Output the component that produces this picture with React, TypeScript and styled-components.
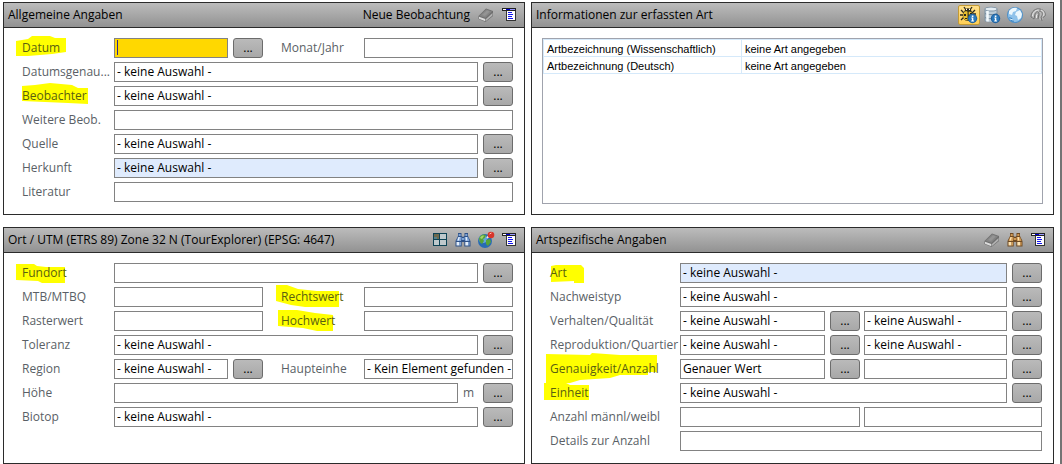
import React, { useState } from 'react';
import styled, { createGlobalStyle } from 'styled-components';

const GlobalStyle = createGlobalStyle`
  * { box-sizing: border-box; }
  body {
    margin: 0;
    background: #fff;
    font-family: 'Open Sans', 'Noto Sans', sans-serif;
    font-size: 12px;
    color: #000;
  }
  button, input, select { font: inherit; color: inherit; margin: 0; }
`;

const Page = styled.main`
  display: grid;
  grid-template-columns: 522fr 523fr;
  grid-template-rows: minmax(213px, auto) minmax(237px, auto);
  gap: 12px 6px;
  padding: 2px 6px 0 3px;
  border-right: 2px solid #747474;
`;

const Panel = styled.section`
  display: flex;
  flex-direction: column;
  min-width: 0;
  border: 1px solid #2b2b2b;
`;

const PanelHeader = styled.header`
  display: flex;
  align-items: center;
  height: 25px;
  padding: 0 4px;
  background: linear-gradient(#bcbcbc, #929292);
  border-bottom: 1px solid #2b2b2b;
`;

const Title = styled.h2`
  flex: 1;
  margin: 0;
  font-size: 12px;
  font-weight: 400;
  line-height: 20px;
  white-space: nowrap;
`;

const Tools = styled.div`
  display: flex;
  align-items: center;
  gap: 1px;
`;

const TextButton = styled.button`
  padding: 0;
  margin-right: 4px;
  border: 0;
  background: none;
  line-height: 20px;
`;

const IconButton = styled.button<{ $active?: boolean }>`
  display: flex;
  align-items: center;
  justify-content: center;
  width: 22px;
  height: 20px;
  padding: 0;
  border: 1px solid ${p => (p.$active ? '#c39a35' : 'transparent')};
  border-radius: 2px;
  background: ${p => (p.$active ? 'linear-gradient(#ffe08a, #ffcf55)' : 'none')};

  svg { flex: none; }
`;

const Form = styled.form`
  display: flex;
  flex-direction: column;
  gap: 4px;
  padding: 10px 11px 10px 18px;
`;

const Row = styled.div<{ $label: number }>`
  display: grid;
  grid-template-columns: ${p => p.$label}px minmax(0, 1fr);
  height: 20px;
`;

const Cells = styled.div<{ $columns?: string; $gap?: number }>`
  display: grid;
  grid-template-columns: ${p => p.$columns ?? 'minmax(0, 1fr)'};
  column-gap: ${p => p.$gap ?? 0}px;
`;

const Group = styled.div`
  display: flex;
  gap: 5px;
  min-width: 0;
`;

const Label = styled.label<{ $inset?: boolean }>`
  position: relative;
  padding-left: ${p => (p.$inset ? 18 : 0)}px;
  line-height: 20px;
  color: #5a5f66;
  white-space: nowrap;
`;

const LabelText = styled.span<{ $marked?: boolean }>`
  position: relative;
  display: block;
  color: ${p => (p.$marked ? '#5a5f10' : 'inherit')};
`;

const Marker = styled.svg`
  position: absolute;
  left: 0;
  top: 0;
  overflow: visible;
  fill: #ffff00;
`;

const Unit = styled.span`
  width: 15px;
  line-height: 20px;
  color: #5a5f66;
`;

const fieldLook = `
  flex: 1;
  min-width: 0;
  width: 100%;
  height: 20px;
  padding: 0 0 0 2px;
  border: 1px solid #828282;
  border-radius: 0;
  outline: none;
  line-height: 18px;
`;

const TextField = styled.input<{ $active?: boolean }>`
  ${fieldLook}
  background: ${p => (p.$active ? '#ffd800' : '#fff')};
`;

const Choice = styled.select<{ $tinted?: boolean }>`
  ${fieldLook}
  appearance: none;
  background: ${p => (p.$tinted ? '#dfebfd' : '#fff')};
`;

const CaretField = styled.div`
  position: relative;
  flex: 1;
  display: flex;
  min-width: 0;
`;

const Caret = styled.span`
  position: absolute;
  left: 3px;
  top: 2px;
  width: 1px;
  height: 15px;
  background: #2a2a90;
`;

const MoreButton = styled.button`
  flex: none;
  width: 30px;
  height: 20px;
  padding: 0;
  border: 1px solid #6c6c6c;
  border-radius: 3px;
  background: linear-gradient(#bababa, #a8a8a8);
  line-height: 18px;
`;

const TableFrame = styled.div`
  flex: 1;
  margin: 10px;
  border: 1px solid #a0a3ad;
`;

const InfoTable = styled.table`
  width: 100%;
  border-collapse: collapse;
  table-layout: fixed;
  font-family: 'Liberation Sans', Arial, sans-serif;
  font-size: 11px;
  line-height: 14px;
`;

const InfoCell = styled.td`
  height: 17px;
  padding: 2px 3px 0;
  border: 1px solid #d5e9fa;
  white-space: nowrap;
`;

const InfoHead = styled(InfoCell).attrs({ as: 'th', scope: 'row' })`
  width: 198px;
  font-weight: 400;
  text-align: left;
`;

const EraserIcon = () => (
  <svg width="16" height="16" viewBox="0 0 16 16">
    <path d="M.5 9 8 1.500 15 4v5l-7.500 6L.5 12z" fill="#6f6f6f" />
    <path d="M1.500 9 8.200 2.300 14 4.500 7.500 10.800z" fill="#858585" />
    <path d="M4 8 9 3.300l2.800 1.100L7 9z" fill="#949494" />
    <path d="M1 9.800l6.300 2.200v2.300L1 11.800z" fill="#dcdcdc" />
    <path d="M8 12l6.500-6v2.500L8 14z" fill="#b2b2b2" />
  </svg>
);

const MenuIcon = () => (
  <svg width="16" height="16" viewBox="0 0 16 16" shapeRendering="crispEdges">
    <path d="M5 2h10v12H5z" fill="#333" />
    <path d="M6 4h8v9H6z" fill="#fff" />
    <path d="M1 1h14v3H1z" fill="#222" />
    <path d="M2 2h3v1H2z" fill="#fff" />
    <path d="M5 2h4v1H5z" fill="#0000d0" />
    <path d="M9 2h5v1H9z" fill="#9a9aff" />
    <path d="M7 5h4v1H7zM7 7h5v1H7zM7 9h4v1H7zM7 11h5v1H7z" fill="#1414f0" />
  </svg>
);

const GridIcon = () => (
  <svg width="16" height="16" viewBox="0 0 16 16" shapeRendering="crispEdges">
    <path d="M1 1h14v13H1z" fill="#0d4254" />
    <path d="M2 2h5v5H2z" fill="#6f6a4e" />
    <path d="M2 5h3v2H2z" fill="#55808a" />
    <path d="M8 2h6v5H8zM2 8h5v5H2zM8 8h6v5H8z" fill="#bfc9cc" />
  </svg>
);

const BinocularsIcon = ({ dark, mid, light }: { dark: string; mid: string; light: string }) => (
  <svg width="16" height="16" viewBox="0 0 16 16">
    <path d="M3 1h3.500v3L8 5l1.500-1V1H13v3l2.500 5v5.500H9.300V10H6.700v4.500H.5V9L3 4z" fill={dark} />
    <path d="M3.700 2h2v2h-2zM10.300 2h2v2h-2zM3 5h3.500L6 9H1.500zM9.500 5H13l1.500 4H10z" fill={mid} />
    <path d="M1.500 10h3v3.500h-3zM10.300 10h3v3.500h-3zM3.500 5h1.300L4 8.500H2.500zM10.500 5h1.300l.5 3.500H11z" fill={light} />
    <path d="M4.500 10H6v3.500H4.500zM13.300 10h1.300v3.500h-1.300zM6.700 6h2.600v2H6.700z" fill={mid} />
  </svg>
);

const GlobePinIcon = () => (
  <svg width="18" height="18" viewBox="0 0 18 18">
    <circle cx="8" cy="10" r="7" fill="#286bb4" />
    <circle cx="6" cy="8" r="4" fill="#65a5dd" />
    <path d="M2 7c2-4 5-4 7-3l-1 3-2 1 1 2-2 3C3 12 2 10 2 7zM9 9l4-1 1 3-3 4-2-2z" fill="#57a33a" />
    <path d="M3 7c1-2 3-3 4-2L5 8z" fill="#a6d56a" />
    <path d="M10 7l3-3" stroke="#eee" strokeWidth="2" />
    <circle cx="14" cy="4" r="3.300" fill="#d8352b" />
    <path d="M12.500 3l2-1" stroke="#ffc0b8" />
  </svg>
);

const InfoBadge = () => (
  <g>
    <circle cx="12.500" cy="12.500" r="4.700" fill="#1d5f9e" />
    <circle cx="12.500" cy="12.500" r="3.700" fill="#2c79bb" />
    <path d="M11.800 9.500h1.600V11h-1.600zM11.300 11.600h2V14.500h.7v.9h-2.800v-.9h.7v-2h-.6z" fill="#fff" />
  </g>
);

const BugInfoIcon = () => (
  <svg width="18" height="18" viewBox="0 0 18 18">
    <path d="M4 1l2 3M12 1l-2 3M1 4l3 3M15 4l-3 3M0 9h3M1 14l3-3M13 8h3" stroke="#2b2a20" strokeWidth="1.300" />
    <path d="M4.500 6c0-5 7-5 7 0z" fill="#25251f" />
    <ellipse cx="8" cy="9.500" rx="5.300" ry="5.500" fill="#3a371c" />
    <path d="M3.500 7c1-2 4-2 4-1v8.500c-4 0-5-4-4-7.500zM8.700 6c2-1 4 1 4 2.500h-4z" fill="#e9bf2d" />
    <path d="M4 8h2v2H4zM5 12h2v1H5zM10 7h2v1h-2z" fill="#2a2820" />
    <path d="M6 3h1v1H6zM9 3h1v1H9z" fill="#fff" />
    <InfoBadge />
  </svg>
);

const DatabaseInfoIcon = () => (
  <svg width="18" height="18" viewBox="0 0 18 18">
    <path d="M1.500 3c0-3 13-3 13 0v11.500c0 2.500-13 2.500-13 0z" fill="#7f93a4" />
    <path d="M2.500 4c0 2 11 2 11 0v10.500c0 1.800-11 1.800-11 0z" fill="#bccbd6" />
    <ellipse cx="8" cy="3" rx="5.500" ry="1.500" fill="#e3ecf2" />
    <path d="M2 7.500c2 1.500 10 1.500 12 0M2 11.500c2 1.500 10 1.500 12 0" fill="none" stroke="#71879a" />
    <path d="M4.500 5v10.500" stroke="#f2f8fc" strokeWidth="2.500" />
    <InfoBadge />
  </svg>
);

const WorldIcon = () => (
  <svg width="18" height="18" viewBox="0 0 18 18">
    <circle cx="9" cy="9" r="8" fill="#4e90c9" />
    <circle cx="9" cy="9" r="7" fill="#8fc2ea" />
    <path d="M3 5c2-3 5-4 8-3l-1 3-3 1-1 3-3-1zM10 6l4-2 2 4-1 4-3 2-1-4-2-1z" fill="#ecf7fd" />
    <path d="M3 11l3 1 2 4c-2 0-4-2-5-5z" fill="#3c86c5" />
    <path d="M4 13l3 1" stroke="#dff2fb" />
  </svg>
);

const ShellIcon = () => (
  <svg width="16" height="16" viewBox="0 0 16 16" fill="none">
    <path d="M1 10C1 4 6 1 10 2c4 1 6 4 5 7l-2 2-1 3-3-2 1-4-2-3-3 2v4l-3 1z" fill="#b9b9b9" />
    <path d="M1 10C1 4 6 1 10 2c4 1 6 4 5 7-1 1-2 1-2 2M1 10l3 2 1-5c1-3 4-3 4 0l-1 5M9 4c4 0 4 4 2 6l1 4" stroke="#707070" />
    <path d="M2.500 9C3 5 6 3 8.500 3M11 3c3 1 3.500 4 2.500 6M6.500 11V8l1-1" stroke="#e8e8e8" />
  </svg>
);

const EMPTY = '- keine Auswahl -';

type FieldProps = { id?: string; name?: string; value?: string; tinted?: boolean; more?: boolean };

const Field = ({ id, name, value, tinted, more }: FieldProps) => (
  <Group>
    {value ? (
      <Choice id={id} aria-label={name} $tinted={tinted}>
        <option>{value}</option>
      </Choice>
    ) : (
      <TextField id={id} aria-label={name} type="text" />
    )}
    {more && <MoreButton type="button">...</MoreButton>}
  </Group>
);

type CaptionProps = { htmlFor: string; text: string; mark?: string; inset?: boolean };

const Caption = ({ htmlFor, text, mark, inset }: CaptionProps) => (
  <Label htmlFor={htmlFor} $inset={inset}>
    {mark && (
      <Marker width="1" height="1" aria-hidden="true">
        <path d={mark} />
      </Marker>
    )}
    <LabelText $marked={!!mark}>{text}</LabelText>
  </Label>
);

const PAIR = 'minmax(0, 149fr) 101px minmax(0, 149fr)';
const HALVES = 'minmax(0, 180fr) minmax(0, 178fr)';

const GeneralPanel = () => {
  const [date, setDate] = useState('');
  return (
    <Panel>
      <PanelHeader>
        <Title>Allgemeine Angaben</Title>
        <Tools>
          <TextButton type="button">Neue Beobachtung</TextButton>
          <IconButton type="button" aria-label="Leeren"><EraserIcon /></IconButton>
          <IconButton type="button" aria-label="Menü"><MenuIcon /></IconButton>
        </Tools>
      </PanelHeader>
      <Form>
        <Row $label={92}>
          <Caption htmlFor="datum" text="Datum" mark="M-6 3 6 1 10-2H28L33 0H44V14L30 16 6 18H-6z" />
          <Cells $columns={PAIR}>
            <Group>
              <CaretField>
                <TextField id="datum" $active value={date} onChange={e => setDate(e.target.value)} />
                {!date && <Caret />}
              </CaretField>
              <MoreButton type="button">...</MoreButton>
            </Group>
            <Caption htmlFor="monat" text="Monat/Jahr" inset />
            <Field id="monat" />
          </Cells>
        </Row>
        <Row $label={92}>
          <Caption htmlFor="genau" text="Datumsgenau..." />
          <Field id="genau" value={EMPTY} more />
        </Row>
        <Row $label={92}>
          <Caption htmlFor="beobachter" text="Beobachter" mark="M0 0 13-1 28-3 50-1 56 2H66V18L46 17 0 15z" />
          <Field id="beobachter" value={EMPTY} more />
        </Row>
        <Row $label={92}>
          <Caption htmlFor="weitere" text="Weitere Beob." />
          <Field id="weitere" />
        </Row>
        <Row $label={92}>
          <Caption htmlFor="quelle" text="Quelle" />
          <Field id="quelle" value={EMPTY} more />
        </Row>
        <Row $label={92}>
          <Caption htmlFor="herkunft" text="Herkunft" />
          <Field id="herkunft" value={EMPTY} tinted more />
        </Row>
        <Row $label={92}>
          <Caption htmlFor="literatur" text="Literatur" />
          <Field id="literatur" />
        </Row>
      </Form>
    </Panel>
  );
};

const SpeciesInfoPanel = () => (
  <Panel>
    <PanelHeader>
      <Title>Informationen zur erfassten Art</Title>
      <Tools>
        <IconButton type="button" aria-label="Artinfo" $active><BugInfoIcon /></IconButton>
        <IconButton type="button" aria-label="Datenbankinfo"><DatabaseInfoIcon /></IconButton>
        <IconButton type="button" aria-label="Web"><WorldIcon /></IconButton>
        <IconButton type="button" aria-label="Mollusken"><ShellIcon /></IconButton>
      </Tools>
    </PanelHeader>
    <TableFrame>
      <InfoTable>
        <tbody>
          <tr>
            <InfoHead>Artbezeichnung (Wissenschaftlich)</InfoHead>
            <InfoCell>keine Art angegeben</InfoCell>
          </tr>
          <tr>
            <InfoHead>Artbezeichnung (Deutsch)</InfoHead>
            <InfoCell>keine Art angegeben</InfoCell>
          </tr>
        </tbody>
      </InfoTable>
    </TableFrame>
  </Panel>
);

const PlacePanel = () => (
  <Panel>
    <PanelHeader>
      <Title>Ort / UTM (ETRS 89) Zone 32 N (TourExplorer) (EPSG: 4647)</Title>
      <Tools>
        <IconButton type="button" aria-label="Raster"><GridIcon /></IconButton>
        <IconButton type="button" aria-label="Ort suchen">
          <BinocularsIcon dark="#2f5288" mid="#7fa4d6" light="#e4eefa" />
        </IconButton>
        <IconButton type="button" aria-label="Karte"><GlobePinIcon /></IconButton>
        <IconButton type="button" aria-label="Menü"><MenuIcon /></IconButton>
      </Tools>
    </PanelHeader>
    <Form>
      <Row $label={92}>
        <Caption htmlFor="fundort" text="Fundort" mark="M-6 1H12L15 3 24 4H43V20H20L16 18-6 17z" />
        <Field id="fundort" more />
      </Row>
      <Row $label={92}>
        <Caption htmlFor="mtb" text="MTB/MTBQ" />
        <Cells $columns={PAIR}>
          <Field id="mtb" />
          <Caption htmlFor="rechtswert" text="Rechtswert" inset mark="M13-2H24L35 2 54 4H76V20H42L28 18 13 14z" />
          <Field id="rechtswert" />
        </Cells>
      </Row>
      <Row $label={92}>
        <Caption htmlFor="raster" text="Rasterwert" />
        <Cells $columns={PAIR}>
          <Field id="raster" />
          <Caption htmlFor="hochwert" text="Hochwert" inset mark="M15-1H34L52 2 70 4V20H54L40 17 15 15z" />
          <Field id="hochwert" />
        </Cells>
      </Row>
      <Row $label={92}>
        <Caption htmlFor="toleranz" text="Toleranz" />
        <Field id="toleranz" value={EMPTY} more />
      </Row>
      <Row $label={92}>
        <Caption htmlFor="region" text="Region" />
        <Cells $columns={PAIR}>
          <Field id="region" value={EMPTY} more />
          <Caption htmlFor="haupt" text="Haupteinhe" inset />
          <Field id="haupt" value="- Kein Element gefunden -" />
        </Cells>
      </Row>
      <Row $label={92}>
        <Caption htmlFor="hoehe" text="Höhe" />
        <Group>
          <TextField id="hoehe" type="text" />
          <Unit>m</Unit>
          <MoreButton type="button">...</MoreButton>
        </Group>
      </Row>
      <Row $label={92}>
        <Caption htmlFor="biotop" text="Biotop" />
        <Field id="biotop" value={EMPTY} more />
      </Row>
    </Form>
  </Panel>
);

const SpeciesPanel = () => (
  <Panel>
    <PanelHeader>
      <Title>Artspezifische Angaben</Title>
      <Tools>
        <IconButton type="button" aria-label="Leeren"><EraserIcon /></IconButton>
        <IconButton type="button" aria-label="Art suchen">
          <BinocularsIcon dark="#6e4a24" mid="#d09a55" light="#fde2b0" />
        </IconButton>
        <IconButton type="button" aria-label="Menü"><MenuIcon /></IconButton>
      </Tools>
    </PanelHeader>
    <Form>
      <Row $label={130}>
        <Caption htmlFor="art" text="Art" mark="M1 3 6 2H31L34 5V20H24V18L1 19z" />
        <Field id="art" value={EMPTY} tinted more />
      </Row>
      <Row $label={130}>
        <Caption htmlFor="nachweis" text="Nachweistyp" />
        <Field id="nachweis" value={EMPTY} more />
      </Row>
      <Row $label={130}>
        <Caption htmlFor="verhalten" text="Verhalten/Qualität" />
        <Cells $columns={HALVES} $gap={4}>
          <Field id="verhalten" value={EMPTY} more />
          <Field name="Qualität" value={EMPTY} more />
        </Cells>
      </Row>
      <Row $label={130}>
        <Caption htmlFor="repro" text="Reproduktion/Quartier" />
        <Cells $columns={HALVES} $gap={4}>
          <Field id="repro" value={EMPTY} more />
          <Field name="Quartier" value={EMPTY} more />
        </Cells>
      </Row>
      <Row $label={130}>
        <Caption htmlFor="anzahl" text="Genauigkeit/Anzahl" mark="M-4-5 40-4 42-6 70-4 76-4H107V13H98V16H70L60 19 30 21 20 24-4 25z" />
        <Cells $columns={HALVES} $gap={4}>
          <Field id="anzahl" value="Genauer Wert" more />
          <Field name="Anzahl" more />
        </Cells>
      </Row>
      <Row $label={130}>
        <Caption htmlFor="einheit" text="Einheit" mark="M-6 0 16 0 20 2H39V17H-6z" />
        <Field id="einheit" value={EMPTY} more />
      </Row>
      <Row $label={130}>
        <Caption htmlFor="maennl" text="Anzahl männl/weibl" />
        <Cells $columns={HALVES} $gap={4}>
          <Field id="maennl" />
          <Field name="Anzahl weiblich" />
        </Cells>
      </Row>
      <Row $label={130}>
        <Caption htmlFor="details" text="Details zur Anzahl" />
        <Field id="details" />
      </Row>
    </Form>
  </Panel>
);

export default function App() {
  return (
    <>
      <GlobalStyle />
      <Page>
        <GeneralPanel />
        <SpeciesInfoPanel />
        <PlacePanel />
        <SpeciesPanel />
      </Page>
    </>
  );
}
